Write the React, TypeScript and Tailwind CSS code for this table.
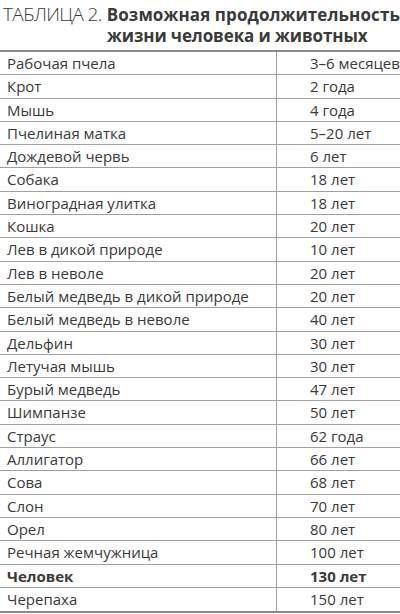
import React from "react";

const rows: [string, string, boolean?][] = [
  ["Рабочая пчела", "3–6 месяцев"],
  ["Крот", "2 года"],
  ["Мышь", "4 года"],
  ["Пчелиная матка", "5–20 лет"],
  ["Дождевой червь", "6 лет"],
  ["Собака", "18 лет"],
  ["Виноградная улитка", "18 лет"],
  ["Кошка", "20 лет"],
  ["Лев в дикой природе", "10 лет"],
  ["Лев в неволе", "20 лет"],
  ["Белый медведь в дикой природе", "20 лет"],
  ["Белый медведь в неволе", "40 лет"],
  ["Дельфин", "30 лет"],
  ["Летучая мышь", "30 лет"],
  ["Бурый медведь", "47 лет"],
  ["Шимпанзе", "50 лет"],
  ["Страус", "62 года"],
  ["Аллигатор", "66 лет"],
  ["Сова", "68 лет"],
  ["Слон", "70 лет"],
  ["Орел", "80 лет"],
  ["Речная жемчужница", "100 лет"],
  ["Человек", "130 лет", true],
  ["Черепаха", "150 лет"],
];

export default function App() {
  return (
    <div
      className="w-[400px] h-[614px] overflow-hidden bg-white text-[#3a3a3a]"
      style={{ fontFamily: '"Open Sans", "Noto Sans", sans-serif' }}
    >
      <div className="h-[50px] w-[440px] pl-[3px] pt-[3px]">
        <div className="flex items-baseline whitespace-nowrap leading-[22px]">
          <span className="text-[19px] font-light tracking-[-0.6px]">ТАБЛИЦА 2.</span>
          <span className="ml-[5px] text-[17px] font-bold tracking-[0.1px]">Возможная продолжительность</span>
        </div>
        <div className="pl-[104px] text-[17px] font-bold tracking-[-0.1px] leading-[20px] whitespace-nowrap">
          жизни человека и животных
        </div>
      </div>
      <div className="w-[420px] border-t-2 border-b-2 border-[#8a8a8a]">
        {rows.map(([a, b, bold], i) => (
          <div
            key={i}
            className={`flex h-[23.3px] text-[15px] leading-[22px] whitespace-nowrap ${
              i < rows.length - 1 ? "border-b border-[#a0a0a0]" : ""
            } ${bold ? "font-bold" : ""}`}
          >
            <div className="w-[277px] pl-[7px] border-r border-[#a0a0a0]">{a}</div>
            <div className="pl-[33px]">{b}</div>
          </div>
        ))}
      </div>
    </div>
  );
}
